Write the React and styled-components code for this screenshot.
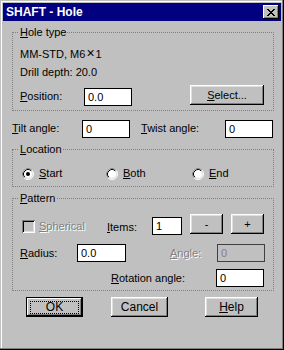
import React from 'react';
import styled, { createGlobalStyle } from 'styled-components';

const GlobalStyle = createGlobalStyle`
  body {
    margin: 0;
    background: #c0c0c0;
    font-family: "Liberation Sans", Arial, sans-serif;
    font-size: 11px;
    color: #000;
  }
`;

const Window = styled.div`
  width: 284px;
  height: 350px;
  box-sizing: border-box;
  padding: 3px;
  background: #c0c0c0;
  box-shadow: inset -1px -1px 0 #000, inset -2px -2px 0 #808080,
    inset 1px 1px 0 #c0c0c0, inset 2px 2px 0 #fff;
`;

const TitleBar = styled.div`
  height: 18px;
  display: flex;
  align-items: center;
  justify-content: space-between;
  padding: 0 2px 0 3px;
  background: #000080;
  color: #fff;
  font-size: 12px;
  font-weight: bold;
`;

const CloseButton = styled.div`
  width: 16px;
  height: 14px;
  display: flex;
  align-items: center;
  justify-content: center;
  background: #c0c0c0;
  box-shadow: inset -1px -1px 0 #000, inset 1px 1px 0 #fff,
    inset -2px -2px 0 #808080;
`;

const Content = styled.div`
  display: flex;
  flex-direction: column;
  padding: 0 7px 0 9px;
`;

const Group = styled.fieldset`
  margin: ${p => p.$mt}px 0 0;
  padding: 0;
  min-width: 0;
  border: 1px dotted #808080;
`;

const Legend = styled.legend`
  margin-left: 6px;
  padding: 0 1px;
  line-height: 13px;
`;

const GroupBody = styled.div`
  display: flex;
  flex-direction: column;
  padding: ${p => p.$pt}px 9px ${p => p.$pb}px 7px;
`;

const Row = styled.div`
  display: flex;
  align-items: ${p => p.$align || 'center'};
  height: ${p => p.$h}px;
  margin-top: ${p => p.$mt || 0}px;
  line-height: 13px;
`;

const Times = styled.span`
  font-size: 14px;
  margin: 0 1px;
`;

const Label = styled.span`
  flex: none;
  width: ${p => (p.$w ? `${p.$w}px` : 'auto')};
  margin-left: ${p => p.$ml || 0}px;
  margin-top: ${p => p.$mt || 0}px;
  color: ${p => (p.$disabled ? '#808080' : '#000')};
  text-shadow: ${p => (p.$disabled ? '1px 1px 0 #fff' : 'none')};
  white-space: nowrap;
`;

const Edit = styled.div`
  flex: none;
  box-sizing: border-box;
  width: ${p => p.$w}px;
  height: 18px;
  margin-left: ${p => p.$ml || 0}px;
  margin-top: ${p => p.$mt || 0}px;
  padding: 1px 0 0 3px;
  line-height: 14px;
  border: 1px solid ${p => (p.$disabled ? '#404040' : '#000')};
  background: ${p => (p.$disabled ? '#c0c0c0' : '#fff')};
  color: ${p => (p.$disabled ? '#808080' : '#000')};
`;

const Button = styled.div`
  flex: none;
  box-sizing: border-box;
  width: ${p => p.$w}px;
  height: ${p => p.$h || 20}px;
  margin-left: ${p => p.$ml || 0}px;
  display: flex;
  align-items: center;
  justify-content: center;
  position: relative;
  font-size: ${p => p.$fs || 11}px;
  background: #c0c0c0;
  box-shadow: ${p =>
    p.$default
      ? 'inset 0 0 0 1px #000, inset -2px -2px 0 #000, inset 2px 2px 0 #fff, inset -3px -3px 0 #808080'
      : 'inset -1px -1px 0 #000, inset 1px 1px 0 #fff, inset -2px -2px 0 #808080, inset 2px 2px 0 #dfdfdf'};
`;

const FocusRing = styled.span`
  position: absolute;
  inset: 4px 4px 3px 4px;
  border: 1px dotted #000;
`;

const RadioItem = styled.label`
  flex: none;
  width: ${p => p.$w}px;
  display: flex;
  align-items: center;
  gap: 5px;
`;

const CheckItem = styled.label`
  flex: none;
  width: 85px;
  margin-left: 2px;
  display: flex;
  align-items: center;
  gap: 4px;
`;

const CheckBox = styled.span`
  width: 13px;
  height: 13px;
  box-sizing: border-box;
  background: #c0c0c0;
  box-shadow: inset 1px 1px 0 #808080, inset -1px -1px 0 #fff,
    inset 2px 2px 0 #000, inset -2px -2px 0 #dfdfdf;
`;

const Radio = ({ checked }) => (
  <svg width="12" height="12" viewBox="0 0 12 12">
    <circle cx="6" cy="6" r="5" fill="#fff" />
    <circle cx="6" cy="6" r="5.5" fill="none" stroke="#fff" />
    <path d="M2.11 9.89 A5.5 5.5 0 0 1 9.89 2.11" fill="none" stroke="#808080" />
    <circle cx="6" cy="6" r="4.5" fill="none" stroke="#dfdfdf" />
    <path d="M2.82 9.18 A4.5 4.5 0 0 1 9.18 2.82" fill="none" stroke="#000" />
    {checked && <circle cx="6" cy="6" r="2" fill="#000" />}
  </svg>
);

const CloseGlyph = () => (
  <svg width="8" height="7" viewBox="0 0 8 7" shapeRendering="crispEdges">
    <rect x="0" y="0" width="2" height="1" />
    <rect x="6" y="0" width="2" height="1" />
    <rect x="1" y="1" width="2" height="1" />
    <rect x="5" y="1" width="2" height="1" />
    <rect x="2" y="2" width="4" height="1" />
    <rect x="3" y="3" width="2" height="1" />
    <rect x="2" y="4" width="4" height="1" />
    <rect x="1" y="5" width="2" height="1" />
    <rect x="5" y="5" width="2" height="1" />
    <rect x="0" y="6" width="2" height="1" />
    <rect x="6" y="6" width="2" height="1" />
  </svg>
);

export default function App() {
  return (
    <Window>
      <GlobalStyle />
      <TitleBar>
        <span>SHAFT - Hole</span>
        <CloseButton><CloseGlyph /></CloseButton>
      </TitleBar>
      <Content>
        <Group $mt={5}>
          <Legend><u>H</u>ole type</Legend>
          <GroupBody $pt={6} $pb={3}>
            <Row $h={18}><span>MM-STD, M6<Times>×</Times>1</span></Row>
            <Row $h={18}>Drill depth: 20.0</Row>
            <Row $h={22} $mt={4} $align="flex-start">
              <Label $w={64} $mt={5}><u>P</u>osition:</Label>
              <Edit $w={48} $mt={3}>0.0</Edit>
              <Button $w={74} $ml={58}><span><u>S</u>elect...</span></Button>
            </Row>
          </GroupBody>
        </Group>

        <Row $h={19} $mt={8}>
          <Label $w={70}><u>T</u>ilt angle:</Label>
          <Edit $w={48}>0</Edit>
          <Label $w={84} $ml={11}><u>T</u>wist angle:</Label>
          <Edit $w={48}>0</Edit>
        </Row>

        <Group $mt={5}>
          <Legend><u>L</u>ocation</Legend>
          <GroupBody $pt={11} $pb={6}>
            <Row $h={13} style={{ marginLeft: 2 }}>
              <RadioItem $w={84}><Radio checked /><span><u>S</u>tart</span></RadioItem>
              <RadioItem $w={86}><Radio /><span><u>B</u>oth</span></RadioItem>
              <RadioItem $w={60}><Radio /><span><u>E</u>nd</span></RadioItem>
            </Row>
          </GroupBody>
        </Group>

        <Group $mt={5}>
          <Legend><u>P</u>attern</Legend>
          <GroupBody $pt={9} $pb={3}>
            <Row $h={22} $align="flex-start">
              <CheckItem style={{ marginTop: 6 }}>
                <CheckBox />
                <Label $disabled><u>S</u>pherical</Label>
              </CheckItem>
              <Label $w={45} $mt={7}><u>I</u>tems:</Label>
              <Edit $w={30} $mt={3}>1</Edit>
              <Button $w={33} $ml={8}>-</Button>
              <Button $w={33} $ml={8}>+</Button>
            </Row>
            <Row $h={18} $mt={8}>
              <Label $w={57}><u>R</u>adius:</Label>
              <Edit $w={49}>0.0</Edit>
              <Label $w={47} $ml={44} $disabled><u>A</u>ngle:</Label>
              <Edit $w={48} $disabled>0</Edit>
            </Row>
            <Row $h={18} $mt={7}>
              <Label $w={105} $ml={91}><u>R</u>otation angle:</Label>
              <Edit $w={48}>0</Edit>
            </Row>
          </GroupBody>
        </Group>

        <Row $h={20} $mt={6}>
          <Button $w={57} $ml={14} $default $fs={12}>OK<FocusRing /></Button>
          <Button $w={57} $ml={28} $fs={12}>Cancel</Button>
          <Button $w={53} $ml={37} $fs={12}><span><u>H</u>elp</span></Button>
        </Row>
      </Content>
    </Window>
  );
}
